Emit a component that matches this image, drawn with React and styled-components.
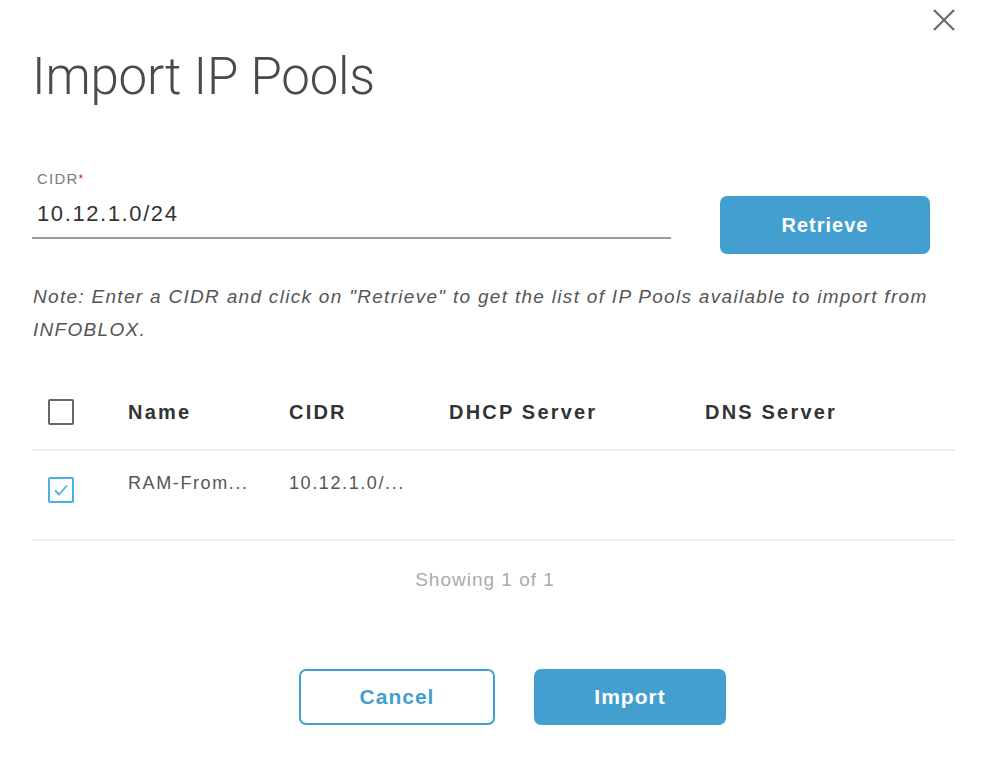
import React from 'react';
import styled, { createGlobalStyle } from 'styled-components';

const GlobalStyle = createGlobalStyle`
  html, body {
    margin: 0;
    padding: 0;
    background: #fff;
  }
  body {
    font-family: "Liberation Sans", Arial, sans-serif;
    color: #333;
  }
`;

const Dialog = styled.div`
  position: relative;
  width: 988px;
  height: 758px;
  box-sizing: border-box;
  padding: 50px 33px 0 32px;
  background: #fff;
`;

const CloseButton = styled.button`
  position: absolute;
  top: 8px;
  right: 32px;
  width: 24px;
  height: 24px;
  padding: 0;
  border: none;
  background: transparent;
  cursor: pointer;
  svg {
    display: block;
  }
`;

const Title = styled.h1`
  margin: 0;
  font-family: Roboto, "Liberation Sans", sans-serif;
  font-weight: 300;
  font-size: 51px;
  letter-spacing: -0.2px;
  line-height: 54px;
  color: #4a4a4a;
`;

const FormRow = styled.div`
  display: flex;
  align-items: flex-end;
  gap: 49px;
  margin-top: 64px;
`;

const Field = styled.div`
  flex: 0 0 639px;
  display: flex;
  flex-direction: column;
`;

const Label = styled.label`
  margin-top: 2px;
  padding-left: 5px;
  font-size: 15px;
  letter-spacing: 1.2px;
  line-height: 18px;
  color: #7a7a7a;
  span {
    color: #e2231a;
    font-size: 12px;
    vertical-align: top;
  }
`;

const Input = styled.input`
  margin-top: 13px;
  padding: 0 0 10px 5px;
  border: none;
  border-bottom: 2px solid #9b9b9b;
  font-family: "Liberation Sans", Arial, sans-serif;
  font-size: 22px;
  letter-spacing: 1.6px;
  line-height: 26px;
  color: #333;
  outline: none;
  background: transparent;
`;

const Button = styled.button`
  box-sizing: border-box;
  width: ${p => p.$width}px;
  height: ${p => p.$height}px;
  border-radius: 7px;
  border: 2px solid #449fd1;
  background: ${p => (p.$outline ? '#fff' : '#449fd1')};
  color: ${p => (p.$outline ? '#449fd1' : '#fff')};
  font-family: "Liberation Sans", Arial, sans-serif;
  font-weight: 700;
  font-size: ${p => p.$size || 21}px;
  letter-spacing: 1px;
  cursor: pointer;
`;

const RetrieveButton = styled(Button)`
  margin-bottom: -15px;
`;

const Note = styled.p`
  margin: 41px 0 0 1px;
  font-style: italic;
  font-size: 19px;
  letter-spacing: 1.3px;
  line-height: 33px;
  color: #555;
  white-space: nowrap;
`;

const Table = styled.div`
  margin-top: 26px;
  width: 923px;
`;

const Row = styled.div`
  display: grid;
  grid-template-columns: 96px 161px 160px 256px 1fr;
  align-items: center;
  height: ${p => p.$height}px;
  border-bottom: 2px solid #eeeeee;
`;

const Cell = styled.div`
  font-size: ${p => (p.$head ? 20 : 18)}px;
  font-weight: ${p => (p.$head ? 700 : 400)};
  color: ${p => (p.$head ? '#333' : '#555')};
  letter-spacing: ${p => (p.$head ? 2.2 : 1.6)}px;
  white-space: nowrap;
  margin-top: ${p => p.$shift || 0}px;
`;

const CheckCell = styled.div`
  padding-left: 16px;
  display: flex;
`;

const Box = styled.span`
  box-sizing: border-box;
  width: 26px;
  height: 26px;
  border: 2px solid ${p => (p.$checked ? '#4ab0de' : '#666')};
  border-radius: 2px;
  display: flex;
  align-items: center;
  justify-content: center;
  margin-top: ${p => p.$offset || 0}px;
`;

const Footer = styled.div`
  text-align: center;
  margin-top: 28px;
  padding-right: 17px;
  font-size: 19px;
  line-height: 22px;
  color: #aaa;
  letter-spacing: 1px;
`;

const Actions = styled.div`
  display: flex;
  justify-content: center;
  gap: 39px;
  margin-top: 78px;
  padding-left: 38px;
`;

const CheckMark = () => (
  <svg width="18" height="18" viewBox="0 0 18 18" fill="none">
    <path d="M3 9.5 L7 13.5 L15 4.5" stroke="#4ab0de" strokeWidth="1.8" />
  </svg>
);

export default function App() {
  return (
    <>
      <GlobalStyle />
      <Dialog>
        <CloseButton aria-label="Close">
          <svg width="24" height="24" viewBox="0 0 24 24">
            <path d="M2 2 L22 22 M22 2 L2 22" stroke="#666" strokeWidth="2" />
          </svg>
        </CloseButton>
        <Title>Import IP Pools</Title>

        <FormRow>
          <Field>
            <Label>
              CIDR<span>*</span>
            </Label>
            <Input defaultValue="10.12.1.0/24" />
          </Field>
          <RetrieveButton $width={210} $height={58} $size={20}>
            Retrieve
          </RetrieveButton>
        </FormRow>

        <Note>
          Note: Enter a CIDR and click on "Retrieve" to get the list of IP Pools available to import from
          <br />
          INFOBLOX.
        </Note>

        <Table>
          <Row $height={77}>
            <CheckCell>
              <Box $offset={2} />
            </CheckCell>
            <Cell $head $shift={4}>Name</Cell>
            <Cell $head $shift={4}>CIDR</Cell>
            <Cell $head $shift={4}>DHCP Server</Cell>
            <Cell $head $shift={4}>DNS Server</Cell>
          </Row>
          <Row $height={88}>
            <CheckCell>
              <Box $checked $offset={-10}>
                <CheckMark />
              </Box>
            </CheckCell>
            <Cell $shift={-24}>RAM-From...</Cell>
            <Cell $shift={-24}>10.12.1.0/...</Cell>
            <Cell />
            <Cell />
          </Row>
        </Table>

        <Footer>Showing 1 of 1</Footer>

        <Actions>
          <Button $outline $width={196} $height={56}>
            Cancel
          </Button>
          <Button $width={192} $height={56}>
            Import
          </Button>
        </Actions>
      </Dialog>
    </>
  );
}
